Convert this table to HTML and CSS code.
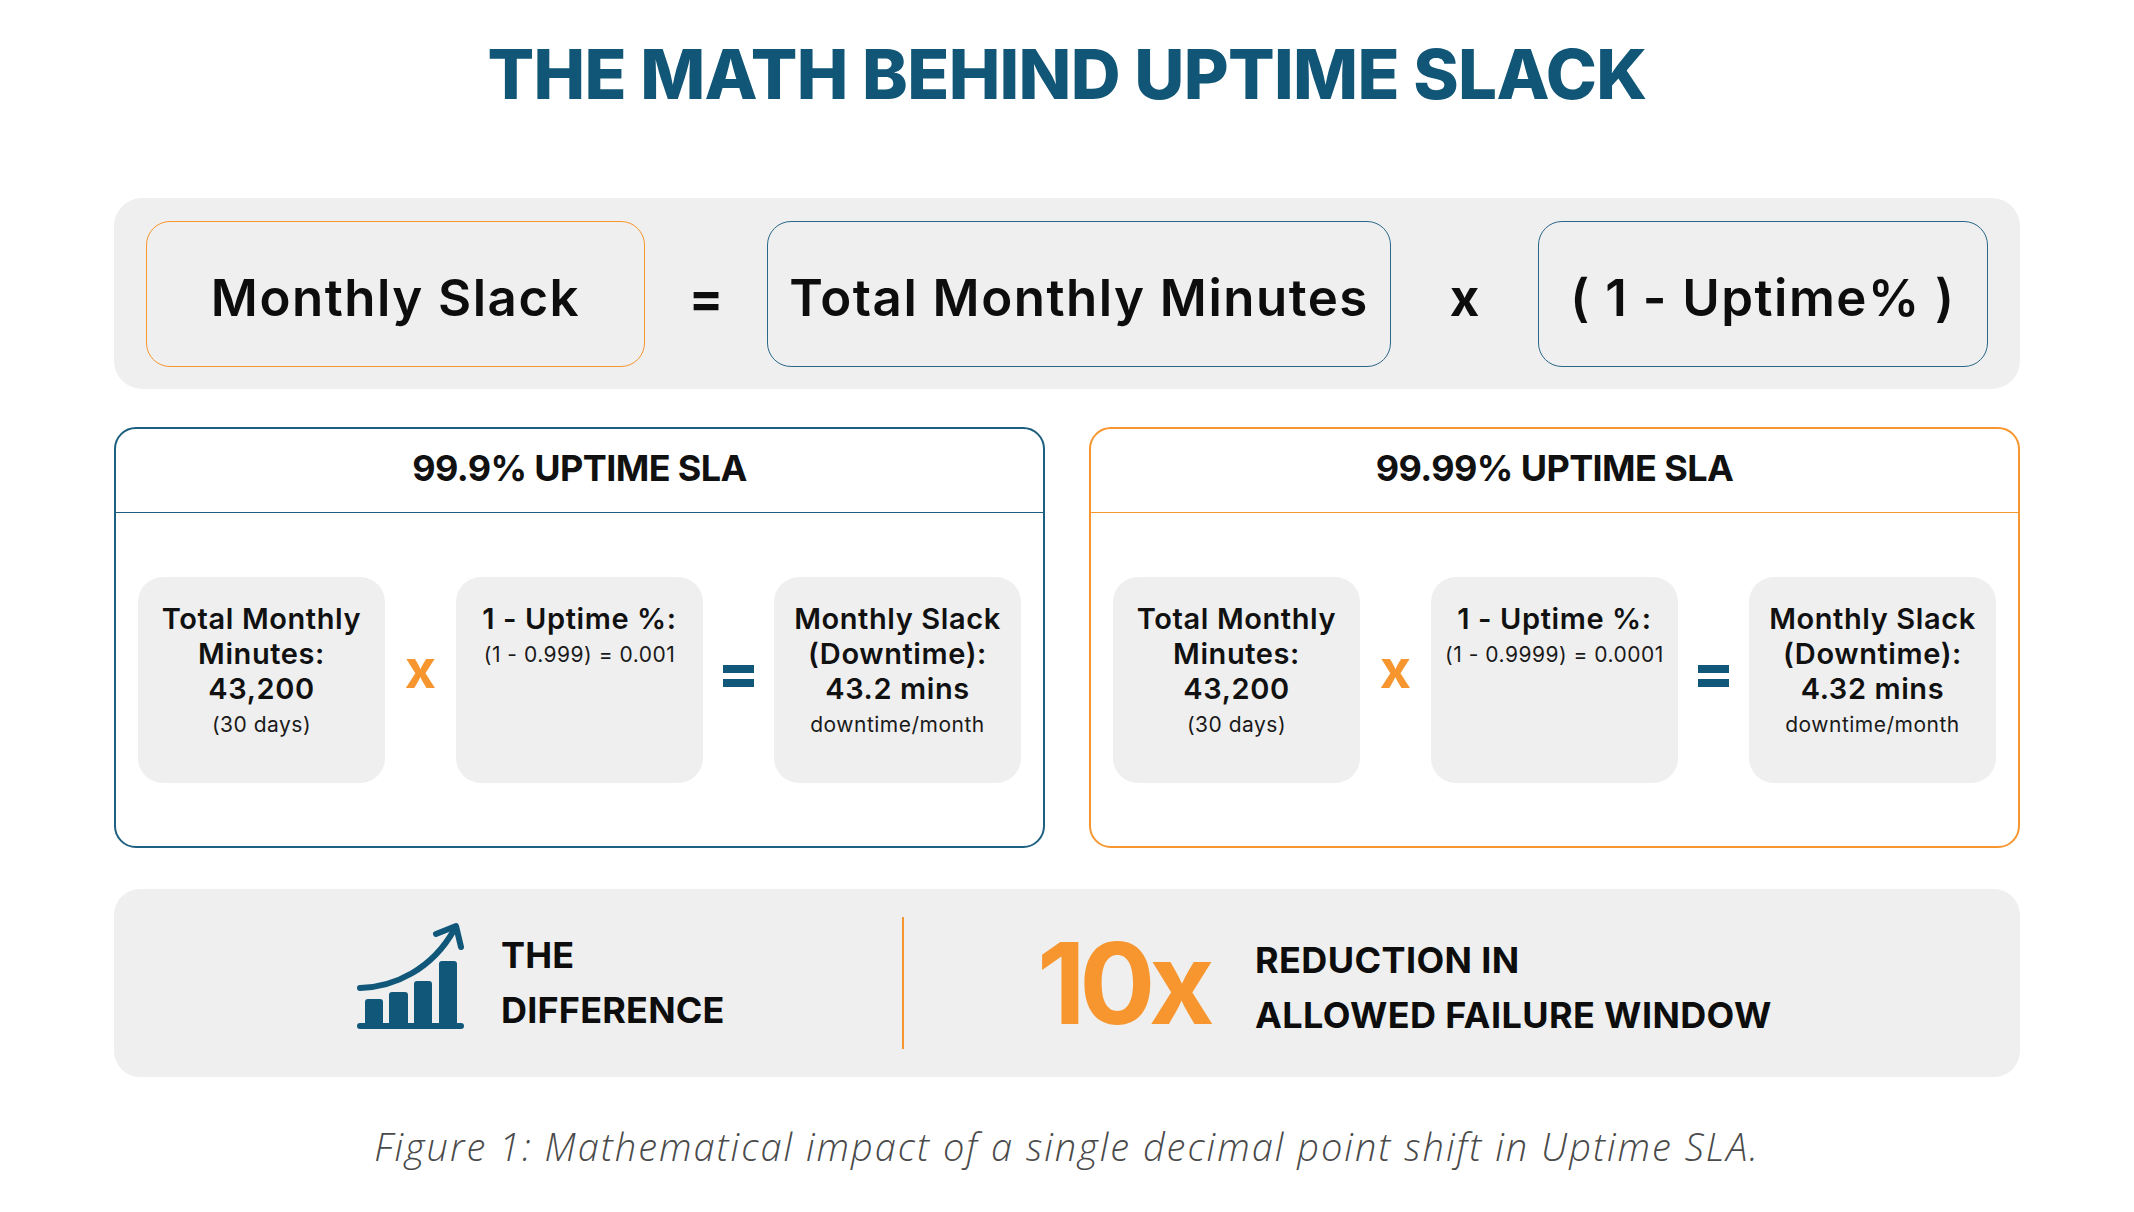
FILE: index.html
```html
<!DOCTYPE html>
<html lang="en">
<head>
<meta charset="utf-8">
<title>The Math Behind Uptime Slack</title>
<link rel="stylesheet" href="styles.css">
</head>
<body>
<main class="page">
  <h1 class="title">THE MATH BEHIND UPTIME SLACK</h1>

  <section class="formula">
    <div class="fbox fbox-orange w-slack">Monthly Slack</div>
    <div class="fop w-op1">=</div>
    <div class="fbox fbox-blue w-total">Total Monthly Minutes</div>
    <div class="fop w-op2">x</div>
    <div class="fbox fbox-blue w-uptime">( 1 - Uptime% )</div>
  </section>

  <section class="cards">
    <article class="card card-blue">
      <header class="card-head">99.9% UPTIME SLA</header>
      <div class="card-body">
        <div class="mbox">
          <div class="big">Total Monthly</div>
          <div class="big">Minutes:</div>
          <div class="big">43,200</div>
          <div class="small">(30 days)</div>
        </div>
        <div class="mop mop-x">x</div>
        <div class="mbox">
          <div class="big">1 - Uptime %:</div>
          <div class="small">(1 - 0.999) = 0.001</div>
        </div>
        <div class="mop"><span class="eq"><i></i><i></i></span></div>
        <div class="mbox">
          <div class="big">Monthly Slack</div>
          <div class="big">(Downtime):</div>
          <div class="big">43.2 mins</div>
          <div class="small">downtime/month</div>
        </div>
      </div>
    </article>

    <article class="card card-orange">
      <header class="card-head">99.99% UPTIME SLA</header>
      <div class="card-body">
        <div class="mbox">
          <div class="big">Total Monthly</div>
          <div class="big">Minutes:</div>
          <div class="big">43,200</div>
          <div class="small">(30 days)</div>
        </div>
        <div class="mop mop-x">x</div>
        <div class="mbox">
          <div class="big">1 - Uptime %:</div>
          <div class="small">(1 - 0.9999) = 0.0001</div>
        </div>
        <div class="mop"><span class="eq"><i></i><i></i></span></div>
        <div class="mbox">
          <div class="big">Monthly Slack</div>
          <div class="big">(Downtime):</div>
          <div class="big">4.32 mins</div>
          <div class="small">downtime/month</div>
        </div>
      </div>
    </article>
  </section>

  <section class="diff">
    <div class="diff-left">
      <svg class="chart-icon" viewBox="0 0 140 135" width="140" height="135" aria-hidden="true">
        <g fill="#11577a">
          <rect x="25" y="90" width="18" height="28" rx="3"/>
          <rect x="49" y="83" width="19" height="35" rx="3"/>
          <rect x="74" y="72" width="18" height="46" rx="3"/>
          <rect x="99" y="52" width="18" height="66" rx="3"/>
        </g>
        <g fill="none" stroke="#11577a" stroke-width="6" stroke-linecap="round" stroke-linejoin="round">
          <line x1="20" y1="117" x2="121" y2="117"/>
          <path d="M20 79 C 55 78 92 60 114 21"/>
          <polyline points="96,25 116,17 121,38"/>
        </g>
      </svg>
      <div class="diff-label">THE<br>DIFFERENCE</div>
    </div>
    <div class="diff-divider"></div>
    <div class="diff-right">
      <div class="ten-x">10x</div>
      <div class="diff-label diff-label-right">REDUCTION IN<br>ALLOWED FAILURE WINDOW</div>
    </div>
  </section>

  <p class="caption">Figure 1: Mathematical impact of a single decimal point shift in Uptime SLA.</p>
</main>
</body>
</html>
```

FILE: styles.css
```css
* { box-sizing: border-box; }

html, body {
  margin: 0;
  padding: 0;
  background: #ffffff;
}

body {
  width: 2134px;
  height: 1212px;
  overflow: hidden;
  font-family: "Inter", "Noto Sans", sans-serif;
  color: #111111;
}

.page {
  padding: 40px 114px 0;
}

.title {
  margin: 0;
  font-size: 69px;
  line-height: 69px;
  font-weight: 800;
  color: #115676;
  text-align: center;
  letter-spacing: -0.7px;
}

/* ---------- formula bar ---------- */
.formula {
  margin-top: 89px;
  height: 191px;
  padding: 0 32px;
  background: #efefef;
  border-radius: 28px;
  display: flex;
  align-items: center;
}

.fbox {
  height: 146px;
  border-radius: 24px;
  display: flex;
  align-items: center;
  justify-content: center;
  padding-top: 8px;
  font-size: 51px;
  font-weight: 600;
  letter-spacing: 1.5px;
  color: #0d0d0d;
  white-space: nowrap;
}

.fbox-orange { border: 1.5px solid #f7962f; }
.fbox-blue { border: 1.5px solid #2b6787; }

.w-slack { width: 499px; }
.w-total { width: 624px; }
.w-uptime { width: 450px; }

.fop {
  text-align: center;
  padding-top: 8px;
  font-size: 51px;
  font-weight: 700;
  color: #0d0d0d;
}
.w-op1 { width: 122px; }
.w-op2 { width: 147px; }

/* ---------- cards ---------- */
.cards {
  margin-top: 38px;
  display: grid;
  grid-template-columns: 1fr 1fr;
  gap: 44px;
}

.card {
  height: 421px;
  border-radius: 22px;
  border: 2px solid;
  display: flex;
  flex-direction: column;
}
.card-blue { border-color: #1c5f80; }
.card-orange { border-color: #f7962f; }

.card-head {
  height: 84px;
  flex: none;
  display: flex;
  align-items: center;
  justify-content: center;
  padding-bottom: 6px;
  font-size: 36px;
  font-weight: 700;
  letter-spacing: -0.6px;
  border-bottom: 1.5px solid;
}
.card-blue .card-head { border-bottom-color: #1c5f80; }
.card-orange .card-head { border-bottom-color: #f7962f; }

.card-body {
  flex: 1;
  display: flex;
  align-items: center;
  justify-content: space-between;
  padding: 0 22px;
}

.mbox {
  width: 247px;
  height: 206px;
  background: #efefef;
  border-radius: 25px;
  padding-top: 24px;
  text-align: center;
}

.big {
  font-size: 29px;
  line-height: 35px;
  font-weight: 600;
  letter-spacing: 0.6px;
  white-space: nowrap;
}

.small {
  margin-top: 4px;
  font-size: 21px;
  line-height: 30px;
  font-weight: 400;
  letter-spacing: 0.5px;
  white-space: nowrap;
  color: #1a1a1a;
}

.mop {
  width: 70px;
  display: flex;
  justify-content: center;
  align-items: center;
  margin-top: -8px;
}

.mop-x {
  font-size: 54px;
  font-weight: 700;
  color: #f7962f;
  line-height: 1;
  padding-bottom: 14px;
}

.eq {
  display: flex;
  flex-direction: column;
  gap: 6px;
}
.eq i {
  display: block;
  width: 31px;
  height: 8px;
  background: #11577a;
}

/* ---------- difference bar ---------- */
.diff {
  margin-top: 41px;
  height: 188px;
  background: #efefef;
  border-radius: 26px;
  display: flex;
  align-items: center;
}

.diff-left {
  width: 788px;
  flex: none;
  padding-left: 226px;
  display: flex;
  align-items: center;
  gap: 21px;
}

.chart-icon {
  display: block;
  width: 140px;
  height: 135px;
  margin-top: -14px;
}

.diff-label {
  font-size: 36px;
  line-height: 55px;
  font-weight: 700;
  letter-spacing: 0.2px;
  color: #0d0d0d;
  white-space: nowrap;
}

.diff-label-right {
  margin-top: 10px;
  letter-spacing: 0.4px;
}

.diff-divider {
  width: 2px;
  height: 132px;
  background: #f7962f;
  flex: none;
}

.diff-right {
  padding-left: 133px;
  display: flex;
  align-items: center;
  gap: 47px;
}

.ten-x {
  font-size: 113px;
  line-height: 1;
  font-weight: 700;
  letter-spacing: -6.5px;
  color: #f7962f;
}

/* ---------- caption ---------- */
.caption {
  margin: 46px 0 0;
  text-align: center;
  font-family: "Open Sans", "Noto Sans", sans-serif;
  font-style: italic;
  font-weight: 300;
  font-size: 38px;
  line-height: 46px;
  letter-spacing: 2px;
  color: #4a4a4a;
}
```
